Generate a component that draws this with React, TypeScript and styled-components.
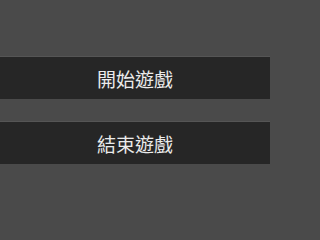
import React from "react";
import styled, { createGlobalStyle } from "styled-components";

const Global = createGlobalStyle`
  html, body { margin: 0; padding: 0; background: #4a4a4a; }
  body { font-family: "Noto Sans CJK TC", "Noto Sans", sans-serif; }
`;

const Screen = styled.div`
  width: 270px;
  height: 220px;
  background: #4a4a4a;
  display: flex;
  flex-direction: column;
  gap: 23px;
  padding-top: 57px;
  box-sizing: border-box;
`;

const MenuButton = styled.button`
  display: flex;
  align-items: center;
  justify-content: center;
  height: 42px;
  width: 100%;
  margin: 0;
  padding: 0;
  border: none;
  box-shadow: 0 -1px 0 #555555;
  background: #262626;
  color: #ebebeb;
  font-family: "Noto Sans CJK TC", "Noto Sans", sans-serif;
  font-size: 19px;
  font-weight: 400;
  cursor: pointer;
`;

export default function App() {
  return (
    <>
      <Global />
      <Screen>
        <MenuButton>開始遊戲</MenuButton>
        <MenuButton>結束遊戲</MenuButton>
      </Screen>
    </>
  );
}
